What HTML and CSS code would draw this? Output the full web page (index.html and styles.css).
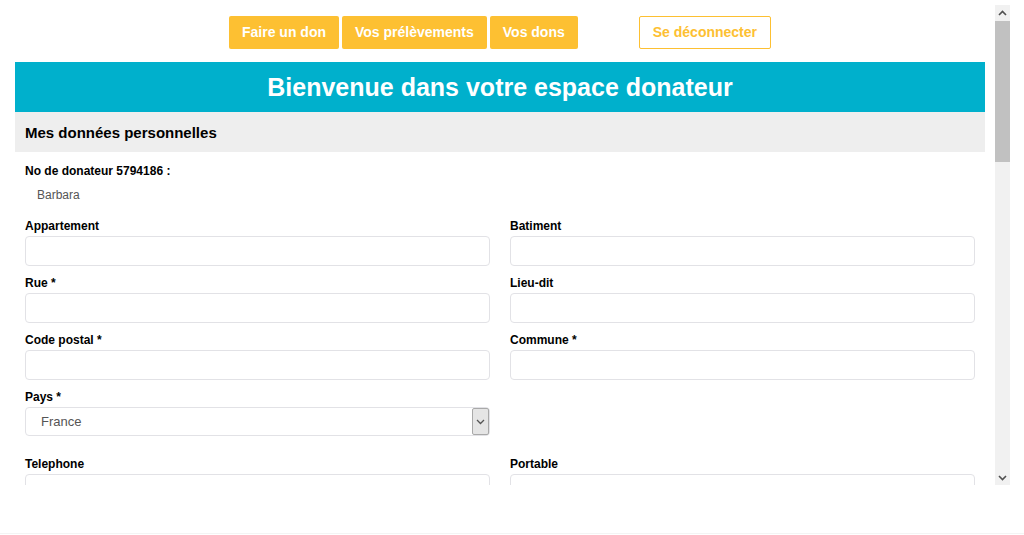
FILE: index.html
```html
<!DOCTYPE html>
<html lang="fr">
  <head>
    <meta charset="UTF-8" />
    <meta name="viewport" content="width=device-width, initial-scale=1.0" />
    <title>Espace donateur</title>
    <link rel="stylesheet" href="styles.css">
  </head>
  <body>
    <div class="frame">
      <div class="viewport">
        <div class="nav">
          <a class="nav-btn" href="#">Faire un don</a>
          <a class="nav-btn" href="#">Vos prélèvements</a>
          <a class="nav-btn" href="#">Vos dons</a>
          <a class="logout-btn" href="#">Se déconnecter</a>
        </div>
        <div class="page">
          <h1 class="banner">Bienvenue dans votre espace donateur</h1>
          <h2 class="section-title">Mes données personnelles</h2>
          <div class="content">
            <div class="donor-no">No de donateur 5794186 :</div>
            <div class="donor-name">Barbara</div>

            <div class="grid">
              <div class="field">
                <label for="appartement">Appartement</label>
                <input type="text" id="appartement" />
              </div>
              <div class="field">
                <label for="batiment">Batiment</label>
                <input type="text" id="batiment" />
              </div>
              <div class="field">
                <label for="rue">Rue *</label>
                <input type="text" id="rue" />
              </div>
              <div class="field">
                <label for="lieudit">Lieu-dit</label>
                <input type="text" id="lieudit" />
              </div>
              <div class="field">
                <label for="cp">Code postal *</label>
                <input type="text" id="cp" />
              </div>
              <div class="field">
                <label for="commune">Commune *</label>
                <input type="text" id="commune" />
              </div>
              <div class="field field-select">
                <label for="pays">Pays *</label>
                <div class="select-wrap">
                  <select id="pays">
                    <option>France</option>
                    <option>Belgique</option>
                    <option>Suisse</option>
                  </select>
                  <span class="select-arrow">
                    <svg width="9" height="6" viewBox="0 0 9 6"><path d="M1 1l3.5 3.5L8 1" fill="none" stroke="#555" stroke-width="1.3"/></svg>
                  </span>
                </div>
              </div>
              <div class="field field-select"></div>
              <div class="field">
                <label for="tel">Telephone</label>
                <input type="text" id="tel" />
              </div>
              <div class="field">
                <label for="portable">Portable</label>
                <input type="text" id="portable" />
              </div>
            </div>
          </div>
        </div>
      </div>
      <div class="scrollbar">
        <div class="sb-btn">
          <svg width="9" height="6" viewBox="0 0 9 6"><path d="M1 5l3.5-3.5L8 5" fill="none" stroke="#505050" stroke-width="1.6"/></svg>
        </div>
        <div class="sb-track">
          <div class="sb-thumb"></div>
        </div>
        <div class="sb-btn">
          <svg width="9" height="6" viewBox="0 0 9 6"><path d="M1 1l3.5 3.5L8 1" fill="none" stroke="#505050" stroke-width="1.6"/></svg>
        </div>
      </div>
    </div>
    <div class="page-end"></div>
  </body>
</html>
```

FILE: styles.css
```css
body {
  margin: 0;
  padding: 0;
  font-family: "Liberation Sans", Arial, sans-serif;
  color: #000;
  background: #fff;
}
.frame {
  margin: 5px 14px 0 5px;
  height: 480px;
  display: flex;
}
.viewport {
  flex: 1;
  overflow: hidden;
}
.scrollbar {
  width: 15px;
  display: flex;
  flex-direction: column;
  background-color: #f1f1f1;
}
.sb-btn {
  height: 15px;
  display: flex;
  align-items: center;
  justify-content: center;
}
.sb-track {
  flex: 1;
  padding-top: 1px;
}
.sb-thumb {
  height: 141px;
  background-color: #c1c1c1;
}
.nav {
  padding-top: 11px;
  display: flex;
  justify-content: center;
  gap: 3px;
}
.nav-btn,
.logout-btn {
  display: block;
  height: 33px;
  line-height: 33px;
  padding: 0 13px;
  font-size: 14px;
  font-weight: bold;
  text-decoration: none;
  border-radius: 2px;
  box-sizing: border-box;
}
.nav-btn {
  background-color: #fdc032;
  color: #fff;
}
.logout-btn {
  margin-left: 58px;
  border: 1px solid #fdc032;
  line-height: 31px;
  color: #fdc032;
  background: #fff;
}
.page {
  margin: 13px 10px 0 10px;
}
.banner {
  margin: 0;
  height: 50px;
  line-height: 50px;
  background-color: #00b0cc;
  color: #fff;
  font-size: 25px;
  text-align: center;
}
.section-title {
  margin: 0;
  height: 40px;
  line-height: 41px;
  padding-left: 10px;
  background-color: #eeeeee;
  font-size: 15px;
}
.content {
  padding: 0 10px;
}
.donor-no {
  margin-top: 12px;
  font-size: 12px;
  font-weight: bold;
  line-height: 14px;
}
.donor-name {
  margin-top: 10px;
  padding-left: 12px;
  font-size: 12px;
  line-height: 14px;
  color: #555;
}
.grid {
  margin-top: 17px;
  display: grid;
  grid-template-columns: 1fr 1fr;
  column-gap: 20px;
}
.field {
  margin-bottom: 10px;
}
.field-select {
  margin-bottom: 21px;
}
.field label {
  display: block;
  font-size: 12px;
  font-weight: bold;
  line-height: 14px;
  margin-bottom: 3px;
}
.field input {
  display: block;
  width: 100%;
  height: 30px;
  box-sizing: border-box;
  border: 1px solid #e2e2e6;
  border-radius: 4px;
  padding: 0 10px;
  font-size: 13px;
  font-family: inherit;
  outline: none;
}
.select-wrap {
  position: relative;
  height: 29px;
}
.select-wrap select {
  display: block;
  width: 100%;
  height: 29px;
  box-sizing: border-box;
  border: 1px solid #e2e2e6;
  border-radius: 4px;
  padding: 0 15px;
  font-size: 13px;
  font-family: inherit;
  color: #555;
  background: #fff;
  -webkit-appearance: none;
  appearance: none;
  outline: none;
}
.select-arrow {
  position: absolute;
  top: 1px;
  right: 1px;
  width: 15px;
  height: 25px;
  border: 1px solid #a9a9a9;
  border-radius: 2px;
  background: #e5e5e5;
  display: flex;
  align-items: center;
  justify-content: center;
  pointer-events: none;
}
.page-end {
  margin-top: 48px;
  border-top: 1px solid #f4f4f4;
}
```
